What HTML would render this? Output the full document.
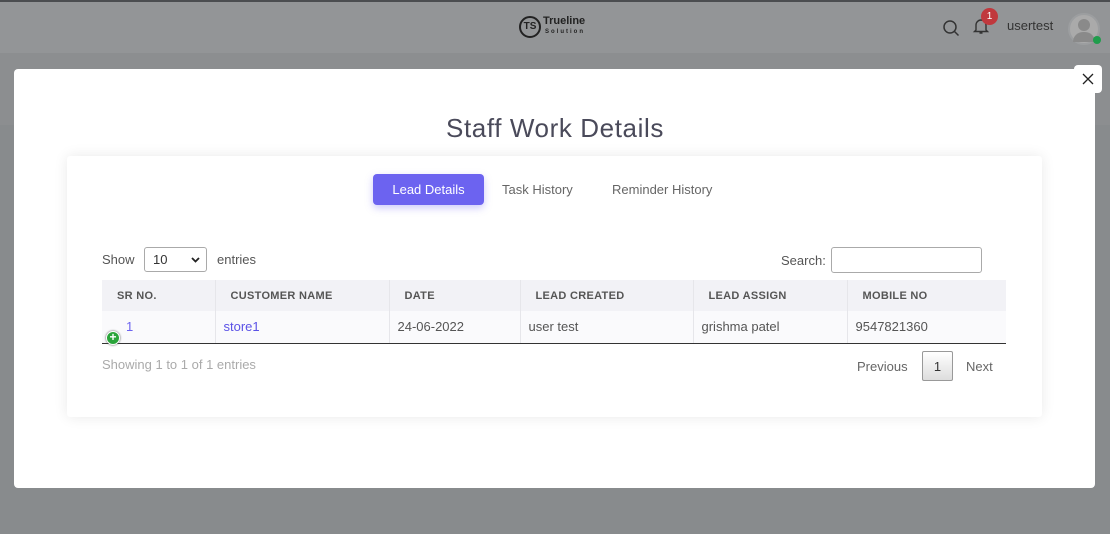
<!DOCTYPE html>
<html><head><meta charset="utf-8"><style>
*{box-sizing:border-box;margin:0;padding:0}
body{width:1110px;height:534px;overflow:hidden;background:#888b8d;font-family:"Liberation Sans",sans-serif;position:relative;color:#555}
.nav{position:absolute;left:0;top:0;width:1110px;height:53px;background:#939597;border-top:2px solid #4b4d50}
.band{position:absolute;left:0;top:53px;width:1110px;height:72px;background:#8c8e90}
.modal{position:absolute;left:14px;top:69px;width:1081px;height:419px;background:#fff;border-radius:4px}
.close{position:absolute;left:1074px;top:65px;width:28px;height:28px;background:#fff;border-radius:4px;text-align:center;line-height:28px;font-size:16px;color:#333}
h1{position:absolute;left:0;width:1110px;top:113px;text-align:center;font-weight:400;font-size:26px;color:#4a4a5a;letter-spacing:.6px}
.card{position:absolute;left:67px;top:156px;width:975px;height:261px;background:#fff;box-shadow:0 0 14px rgba(0,0,0,.09);border-radius:3px}
.t{position:absolute;font-size:13px;white-space:nowrap}
.btn{position:absolute;left:373px;top:174px;width:111px;height:31px;background:#6c63f0;color:#fff;border-radius:4px;font-size:13px;text-align:center;line-height:31px;box-shadow:0 3px 8px rgba(108,99,240,.35)}
table{position:absolute;left:102px;top:280px;width:904px;border-collapse:collapse;font-size:13px}
th{height:31px;background:#f2f2f6;text-align:left;font-size:11px;font-weight:700;color:#555;letter-spacing:.3px;border-left:1px solid #e6e6ea;padding-left:15px}
td{height:32px;background:#fafafc;border-left:1px solid #e6e6ea;padding-left:8px;border-bottom:1px solid #333}
th:first-child,td:first-child{border-left:none}
</style></head><body>
<div class="nav"></div>
<div class="band"></div>
<div style="position:absolute;left:519px;top:16px;width:22px;height:22px;border:2px solid #222;border-radius:50%;font-size:10px;font-weight:700;text-align:center;line-height:18px;color:#222">TS</div>
<div class="t" style="left:543px;top:15px;font-size:11px;font-weight:700;color:#222">Trueline</div>
<div class="t" style="left:545px;top:29px;font-size:6px;letter-spacing:2px;color:#222;font-weight:700">Solution</div>
<svg style="position:absolute;left:942px;top:19px" width="18" height="18" viewBox="0 0 18 18"><circle cx="8" cy="8" r="6" fill="none" stroke="#333" stroke-width="1.5"/><path d="M12.5 12.5L16.5 16.5" stroke="#333" stroke-width="1.5"/></svg>
<svg style="position:absolute;left:971px;top:16px" width="20" height="20" viewBox="0 0 20 20"><path d="M5 14V9a5 5 0 0 1 10 0v5l1.5 1.5h-13z M8.5 17h3" fill="none" stroke="#333" stroke-width="1.4"/></svg>
<div style="position:absolute;left:981px;top:8px;width:17px;height:17px;border-radius:50%;background:#c0383d;color:#fff;font-size:10px;text-align:center;line-height:17px">1</div>
<div class="t" style="left:1007px;top:18px;color:#333;font-size:13px">usertest</div>
<div style="position:absolute;left:1068px;top:13px;width:32px;height:32px;border-radius:50%;background:#aaa;border:2px solid #9c9ea0"></div>
<div style="position:absolute;left:1078px;top:19px;width:12px;height:12px;border-radius:50%;background:#8a8a8a"></div>
<div style="position:absolute;left:1073px;top:32px;width:22px;height:10px;border-radius:10px 10px 0 0;background:#8a8a8a"></div>
<div style="position:absolute;left:1093px;top:36px;width:8px;height:8px;border-radius:50%;background:#1f9d4c"></div>
<div class="modal"></div>
<div class="close"><svg width="12" height="12" viewBox="0 0 12 12" style="margin-top:8px"><path d="M1 1L11 11M11 1L1 11" stroke="#222" stroke-width="1.3"/></svg></div>
<h1>Staff Work Details</h1>
<div class="card"></div>
<div class="btn">Lead Details</div>
<div class="t" style="left:502px;top:182px;color:#666">Task History</div>
<div class="t" style="left:612px;top:182px;color:#666">Reminder History</div>
<div class="t" style="left:102px;top:252px;color:#555">Show</div>
<div style="position:absolute;left:144px;top:247px;width:63px;height:25px;border:1px solid #aaa;border-radius:3px;font-size:13px;padding:4px 8px;color:#333">10<svg style="position:absolute;right:6px;top:9px" width="9" height="6" viewBox="0 0 9 6"><path d="M1 1l3.5 3.5L8 1" fill="none" stroke="#222" stroke-width="1.8"/></svg></div>
<div class="t" style="left:217px;top:252px;color:#555">entries</div>
<div class="t" style="left:781px;top:253px;color:#555">Search:</div>
<div style="position:absolute;left:831px;top:247px;width:151px;height:26px;border:1px solid #aaa;border-radius:3px"></div>
<table><tr><th style="width:113px">SR NO.</th><th style="width:174px">CUSTOMER NAME</th><th style="width:131px">DATE</th><th style="width:173px">LEAD CREATED</th><th style="width:154px">LEAD ASSIGN</th><th>MOBILE NO</th></tr>
<tr><td style="padding-left:24px;color:#6c63f0">1</td><td style="color:#5b52e6">store1</td><td>24-06-2022</td><td>user test</td><td>grishma patel</td><td>9547821360</td></tr></table>
<div style="position:absolute;left:106px;top:331px;width:14px;height:14px;border-radius:50%;background:#2aa43a;border:1.5px solid #fff;box-shadow:0 0 2px #555;color:#fff;font-size:12px;line-height:11px;text-align:center;font-weight:700">+</div>
<div class="t" style="left:102px;top:357px;color:#aaa">Showing 1 to 1 of 1 entries</div>
<div class="t" style="left:857px;top:359px;color:#666">Previous</div>
<div style="position:absolute;left:922px;top:351px;width:31px;height:30px;border:1px solid #999;border-radius:2px;background:linear-gradient(#fff,#ddd);text-align:center;line-height:29px;font-size:13px;color:#333">1</div>
<div class="t" style="left:966px;top:359px;color:#666">Next</div>
</body></html>
